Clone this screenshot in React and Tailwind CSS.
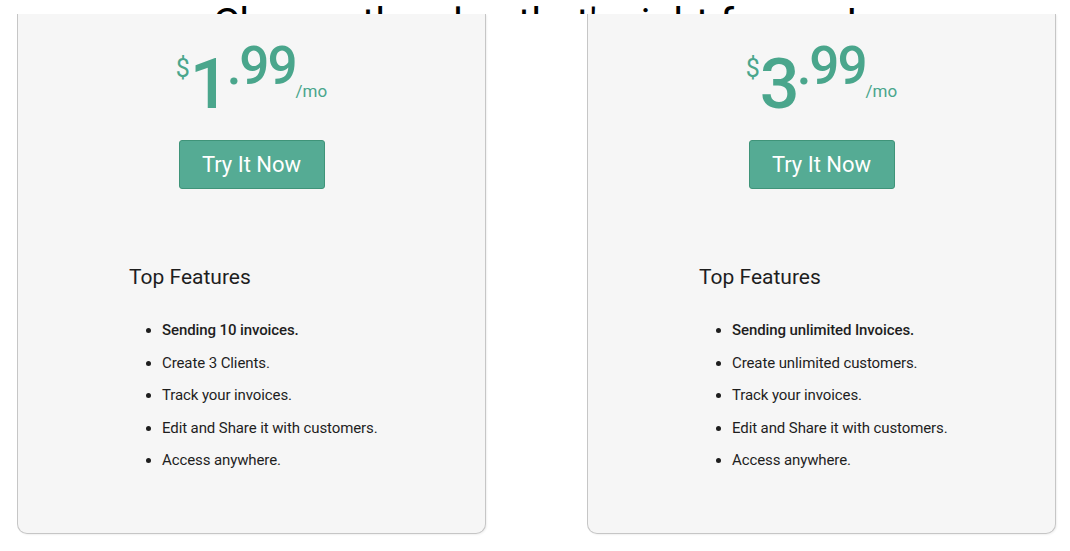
const plans = [
  {
    dollars: '1',
    features: ['Sending 10 invoices.', 'Create 3 Clients.', 'Track your invoices.', 'Edit and Share it with customers.', 'Access anywhere.'],
  },
  {
    dollars: '3',
    features: ['Sending unlimited Invoices.', 'Create unlimited customers.', 'Track your invoices.', 'Edit and Share it with customers.', 'Access anywhere.'],
  },
];

function PlanCard({ plan }) {
  return (
    <div className="w-[469px] h-[520px] bg-[#f6f6f6] border-x border-b border-[#c6c6c6] rounded-b-[10px] shadow-[1px_1px_2px_rgba(0,0,0,0.06)] pt-[26px]">
      <div className="flex justify-center items-start text-[#4aa68c]">
        <span className="text-[25px] leading-none mt-[16px]">$</span>
        <span className="text-[70px] leading-none mt-[9px] font-medium tracking-[-3px]">{plan.dollars}</span>
        <span className="text-[53px] leading-none font-medium tracking-[-2px]">.99</span>
        <span className="text-[17px] leading-none mt-[43px]">/mo</span>
      </div>
      <div className="flex justify-center mt-[21px]">
        <button className="w-[146px] h-[49px] bg-[#55ab94] border border-[#3f9479] rounded-[3px] text-white text-[22px] leading-none">
          Try It Now
        </button>
      </div>
      <div className="pl-[111px] mt-[78px]">
        <h3 className="text-[21px] leading-none text-[#1e1e1e]">Top Features</h3>
        <ul className="list-disc pl-[33px] mt-[26px] text-[15px] tracking-[-0.1px] leading-[32.5px] text-[#1e1e1e]">
          {plan.features.map((f, i) => (
            <li key={i} className={i === 0 ? 'font-medium' : ''}>{f}</li>
          ))}
        </ul>
      </div>
    </div>
  );
}

export default function App() {
  return (
    <div className="w-[1070px] h-[551px] bg-white overflow-hidden font-['Roboto',sans-serif]">
      <div className="h-[14px] overflow-hidden">
        <h1 className="text-[41px] leading-none text-center text-black mt-[3px]">
          Choose the plan that's right for you!
        </h1>
      </div>
      <div className="flex gap-[101px] pl-[17px]">
        {plans.map((p) => (
          <PlanCard key={p.dollars} plan={p} />
        ))}
      </div>
    </div>
  );
}
